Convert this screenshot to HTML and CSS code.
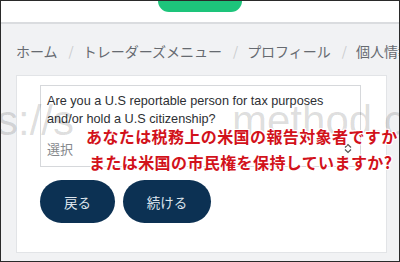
FILE: index.html
```html
<!DOCTYPE html>
<html lang="ja">
<head>
<meta charset="utf-8">
<link rel="stylesheet" href="styles.css">
</head>
<body>
<div class="frame">
  <header class="topbar"><div class="pill"></div></header>
  <main class="main">
    <nav class="crumbs">
      <span>ホーム</span><span class="sep">/</span>
      <span>トレーダーズメニュー</span><span class="sep">/</span>
      <span>プロフィール</span><span class="sep">/</span>
      <span>個人情報</span>
    </nav>
    <section class="card">
      <div class="select">
        <p class="question">Are you a U.S reportable person for tax purposes and/or hold a U.S citizenship?</p>
        <div class="choice">
          <span class="placeholder">選択</span>
          <svg class="arrows" width="8" height="11" viewBox="0 0 8 11"><path d="M1 4.5 L4 1.5 L7 4.5 M1 6.5 L4 9.5 L7 6.5" fill="none" stroke="#555" stroke-width="1.2"/></svg>
        </div>
      </div>
      <div class="actions">
        <button class="btn back">戻る</button>
        <button class="btn next">続ける</button>
      </div>
    </section>
  </main>
  <div class="watermark"><span class="wm1">s://s</span><span class="wm2">method.c</span></div>
  <div class="overlay">
    <p class="red l1">あなたは税務上の米国の報告対象者ですか</p>
    <p class="red l2">または米国の市民権を保持していますか?</p>
  </div>
</div>
</body>
</html>
```
FILE: styles.css
```css
* { box-sizing: border-box; }
html, body { margin: 0; padding: 0; }
body { width: 400px; height: 262px; overflow: hidden; font-family: "Noto Sans CJK JP", "Noto Sans", sans-serif; }
.frame {
  position: relative;
  width: 400px; height: 262px;
  border: 1px solid #2a2a2a;
  overflow: hidden;
  background: #f1f2f4;
  display: flex; flex-direction: column;
}
.topbar {
  height: 23px;
  background: #fff;
  border-bottom: 2px solid #dadcdf;
  display: flex; justify-content: center;
  flex: none;
}
.pill {
  width: 84px; height: 11px;
  margin-left: -1px;
  background: #1dc47b;
  border-radius: 0 0 13px 13px;
}
.main { flex: 1; padding: 0 13px 0 15px; }
.crumbs {
  height: 51px;
  display: flex; align-items: center;
  font-size: 14px; color: #666a70;
  white-space: nowrap;
  padding-top: 2px;
}
.crumbs .sep { color: #c8cacd; margin: 0 9px 0 11px; font-size: 13px; }
.card {
  margin-left: 0;
  width: 371px;
  height: 178px;
  background: #fff;
  border: 1px solid #e2e4e7;
  padding: 9px 0 0 23px;
}
.select {
  width: 321px; height: 82px;
  border: 1px solid #d6d8db;
  padding: 6px 0 0 6px;
  position: relative;
}
.question {
  margin: 0;
  font-family: "Liberation Sans", Arial, sans-serif;
  font-size: 12.7px; line-height: 18px;
  color: #2d2f33;
  width: 300px;
}
.choice { display: flex; align-items: center; justify-content: space-between; margin-top: 11px; padding-right: 8px; }
.placeholder { font-size: 13px; color: #85888c; }
.arrows { margin-top: 0; }
.actions { display: flex; gap: 8px; margin-top: 13px; }
.btn {
  height: 43px;
  border: none;
  border-radius: 22px;
  background: #0c3153;
  color: #dfe6ee;
  font-family: "Noto Sans CJK JP", sans-serif;
  font-size: 13.5px;
  padding: 0;
}
.back { width: 75px; }
.next { width: 88px; }
.watermark {
  position: absolute; left: -4px; top: 96px;
  width: 420px;
  font-family: "Liberation Sans", Arial, sans-serif;
  font-size: 42px; color: rgba(0,0,0,0.14);
  white-space: nowrap;
  pointer-events: none;
}
.wm2 { margin-left: 158px; }
.overlay { position: absolute; left: 0; top: 122px; width: 400px; }
.red {
  margin: 0;
  font-family: "Noto Sans CJK JP", sans-serif;
  font-weight: 700;
  font-size: 16px;
  line-height: 26px;
  letter-spacing: 0.4px;
  color: #d2121b;
  white-space: nowrap;
  text-shadow: 1px 0 0 #fff, -1px 0 0 #fff, 0 1px 0 #fff, 0 -1px 0 #fff, 1px 1px 0 #fff, -1px -1px 0 #fff, 1px -1px 0 #fff, -1px 1px 0 #fff;
}
.l1 { padding-left: 85px; }
.l2 { padding-left: 88px; }
```
